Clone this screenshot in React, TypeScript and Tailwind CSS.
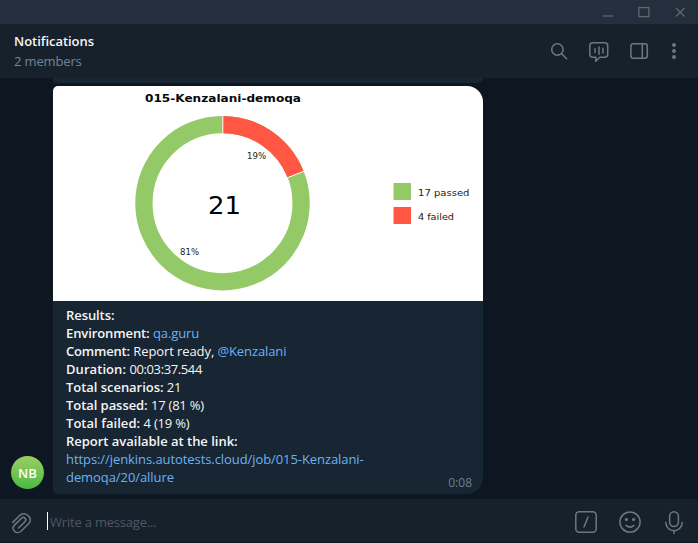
import type { ReactNode } from "react";

function Icon({ w, h, className = "", children }: { w: number; h: number; className?: string; children: ReactNode }) {
  return (
    <svg
      width={w}
      height={h}
      viewBox={`0 0 ${w} ${h}`}
      fill="none"
      stroke="currentColor"
      strokeWidth="1.5"
      strokeLinecap="round"
      strokeLinejoin="round"
      className={`block shrink-0 ${className}`}
    >
      {children}
    </svg>
  );
}

function TitleBar() {
  return (
    <div className="flex h-6 shrink-0 items-center justify-end bg-[#242f3d] text-[#5c6874]">
      <Icon w={96} h={24}>
        <g strokeLinecap="butt" strokeLinejoin="miter" strokeWidth="1.3">
          <path d="M1 16h10" />
          <rect x="36.9" y="7.6" width="10" height="9" />
          <path d="M74 8l8.5 8.5M82.5 8L74 16.5" />
        </g>
      </Icon>
    </div>
  );
}

function Header() {
  return (
    <header className="flex h-[54px] shrink-0 items-center justify-between bg-[#17212b] pl-[14px] text-[#6c7883]">
      <div className="text-[13px] leading-5">
        <div className="tracking-[-0.04px] font-semibold text-[#f5f5f5]">Notifications</div>
        <div className="tracking-[-0.15px] text-[#708499]">2 members</div>
      </div>
      <Icon w={150} h={54}>
        <circle cx="9.4" cy="25.5" r="5.7" />
        <path d="M13.7 29.8l4.9 4.9" />
        <path d="M44.8 18.7h11.9a3 3 0 0 1 3 3v8.6a3 3 0 0 1-3 3h-4.9l-4 4v-4h-3a3 3 0 0 1-3-3v-8.6a3 3 0 0 1 3-3z" />
        <path d="M47 24.7v3.8M51 22.9v7.3M55 24.2v4.8" />
        <rect x="82.9" y="19.7" width="16.4" height="14.6" rx="2.5" />
        <path d="M94.3 20v14" />
        <g fill="currentColor" stroke="none">
          <circle cx="126" cy="21" r="2" />
          <circle cx="126" cy="27" r="2" />
          <circle cx="126" cy="33" r="2" />
        </g>
      </Icon>
    </header>
  );
}

function Chart() {
  return (
    <svg width="430" height="215" viewBox="0 0 430 215" className="block rounded-tl-[5px] rounded-tr-[16px] bg-white font-['DejaVu_Sans',sans-serif]">
      <circle cx="169.5" cy="117.2" r="78.6" fill="none" stroke="#93c966" strokeWidth="17.3" />
      <path d="M169.5 38.6A78.6 78.6 0 0 1 242.7 88.6" fill="none" stroke="#ff5744" strokeWidth="17.3" />
      <path d="M169.8 29v19M233.8 92l17.8-7" stroke="#fff" strokeWidth="1" />
      <text x="92" y="16" fontSize="11.2" fontWeight="700" textLength="156" lengthAdjust="spacingAndGlyphs" fill="#080808">015-Kenzalani-demoqa</text>
      <text x="155" y="127.5" fontSize="25.5" textLength="33" lengthAdjust="spacingAndGlyphs" fill="#000">21</text>
      <text x="194" y="72.5" fontSize="8.7" textLength="19" lengthAdjust="spacingAndGlyphs" fill="#222">19%</text>
      <text x="127" y="169.3" fontSize="8.7" textLength="19" lengthAdjust="spacingAndGlyphs" fill="#222">81%</text>
      <rect x="340.5" y="97" width="17.5" height="17" fill="#93c966" />
      <rect x="340.5" y="121" width="17.5" height="17" fill="#ff5744" />
      <text x="365" y="110.2" fontSize="9.3" textLength="51.5" lengthAdjust="spacingAndGlyphs" fill="#222">17 passed</text>
      <text x="365" y="133.5" fontSize="9.3" textLength="36" lengthAdjust="spacingAndGlyphs" fill="#222">4 failed</text>
    </svg>
  );
}

function Line({ label, labelClass = "", children }: { label: string; labelClass?: string; children?: ReactNode }) {
  return (
    <div>
      <span className={`font-semibold ${labelClass}`}>{label}</span> {children}
    </div>
  );
}

function Message() {
  return (
    <div className="flex items-end gap-[9px] pl-[11px]">
      <div className="mb-[5px] flex size-[33px] items-center justify-center rounded-full bg-linear-to-b from-[#9acd62] to-[#46ba43] pt-[2px] text-[13px] font-semibold text-white">
        NB
      </div>
      <div className="w-[430px] rounded-tl-[5px] rounded-tr-[16px] rounded-br-[16px] rounded-bl-[5px] bg-[#182533]">
        <Chart />
        <div className="flex h-[193px] items-end justify-between pr-[11px] pb-[8px] pl-[13px] text-[13px] leading-[18px] text-[#f5f5f5]">
          <div>
            <Line label="Results:" labelClass="tracking-[-0.08px]" />
            <Line label="Environment:" labelClass="tracking-[-0.1px]"><span className="tracking-[-0.1px] text-[#6ab3f3]">qa.guru</span></Line>
            <Line label="Comment:" labelClass="tracking-[-0.2px]"><span className="tracking-[-0.09px]">Report ready, </span><span className="tracking-[-0.1px] text-[#6ab3f3]">@Kenzalani</span></Line>
            <Line label="Duration:" labelClass="tracking-[0.06px]"><span className="tracking-[-0.38px]">00:03:37.544</span></Line>
            <Line label="Total scenarios:" labelClass="tracking-[-0.04px]"><span className="tracking-[-0.3px]">21</span></Line>
            <Line label="Total passed:" labelClass="tracking-[-0.06px]"><span className="tracking-[-0.24px]">17 (81 %)</span></Line>
            <Line label="Total failed:" labelClass="tracking-[0.04px]"><span className="tracking-[-0.2px]">4 (19 %)</span></Line>
            <Line label="Report available at the link:" labelClass="tracking-[-0.02px]" />
            <div className="tracking-[-0.075px] text-[#6ab3f3]">https://jenkins.autotests.cloud/job/015-Kenzalani-<br />demoqa/20/allure</div>
          </div>
          <span className="-mb-[6px] text-xs leading-[18px] text-[#6d7f8f]">0:08</span>
        </div>
      </div>
    </div>
  );
}

function Composer() {
  return (
    <footer className="flex h-11 shrink-0 items-center justify-between border-b border-[#101821] bg-[#17212b] text-[#6c7883]">
      <div className="flex items-center">
        <Icon w={47} h={44}>
          <path d="M12.8 23.4l6.6-6.6c2.1-2.1 5.5-2.5 8.4-.5 3.2 2.3 3.2 6 .8 8.4l-7.3 7.3c-2 2-5 2-6.8.2s-1.8-4.3 0-6.1l6.9-6.9c1.1-1.1 2.6-1.1 3.6-.1s1 2.5-.1 3.6l-6.3 6.3" />
        </Icon>
        <span className="h-[18px] w-px bg-white" />
        <span className="pt-[2px] pl-[2px] text-[13px] leading-[18px] tracking-[-0.2px] text-[#4d5864]">Write a message...</span>
      </div>
      <Icon w={126} h={44}>
        <rect x="3.8" y="12.8" width="20.4" height="20.4" rx="3.5" />
        <path d="M16 18l-4 10" />
        <circle cx="58" cy="23" r="10.1" />
        <path d="M54 26.4q4 3.4 8 0" />
        <g fill="currentColor" stroke="none"><circle cx="54.4" cy="20.5" r="1.6" /><circle cx="61.6" cy="20.5" r="1.6" /></g>
        <rect x="97.6" y="12.7" width="8.8" height="14.8" rx="4.4" />
        <path d="M93.8 23.5a8.2 8.2 0 0 0 16.4 0M102 31.7v2.8" />
      </Icon>
    </footer>
  );
}

export default function App() {
  return (
    <div className="flex h-[543px] w-[698px] flex-col overflow-hidden bg-[#0e1621] font-['Open_Sans','Noto_Sans',sans-serif]">
      <TitleBar />
      <Header />
      <main className="flex h-[421px] shrink-0 flex-col gap-[3px]">
        <div className="ml-[53px] h-[5px] w-[430px] rounded-br-[12px] rounded-bl-[5px] bg-[#182533]" />
        <Message />
      </main>
      <Composer />
    </div>
  );
}
